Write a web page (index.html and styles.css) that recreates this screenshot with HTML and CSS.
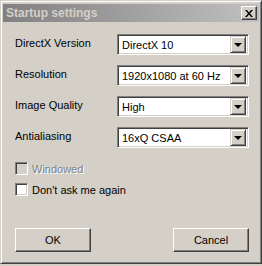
FILE: index.html
```html
<!DOCTYPE html>
<html lang="en">
<head>
    <meta charset="UTF-8">
    <title>Startup settings</title>
    <link rel="stylesheet" href="styles.css">
</head>
<body>
<div class="window">
    <div class="title_bar">
        <span class="title">Startup settings</span>
        <a href="javascript:;" class="close">
            <svg width="8" height="7" viewBox="0 0 8 7"><path d="M0 0h2l2 2.5L6 0h2L5 3.5 8 7H6L4 4.5 2 7H0l3-3.5z" fill="#000"/></svg>
        </a>
    </div>
    <div class="content">
        <div class="rows">
            <label class="lbl">DirectX Version</label>
            <div class="combo"><span class="val">DirectX 10</span><span class="arrow"></span></div>
            <label class="lbl">Resolution</label>
            <div class="combo"><span class="val">1920x1080 at 60 Hz</span><span class="arrow"></span></div>
            <label class="lbl">Image Quality</label>
            <div class="combo"><span class="val">High</span><span class="arrow"></span></div>
            <label class="lbl">Antialiasing</label>
            <div class="combo"><span class="val">16xQ CSAA</span><span class="arrow"></span></div>
        </div>
        <div class="checks">
            <div class="check disabled"><span class="box"></span><span>Windowed</span></div>
            <div class="check"><span class="box"></span><span>Don't ask me again</span></div>
        </div>
        <div class="buttons">
            <a href="javascript:;" class="btn">OK</a>
            <a href="javascript:;" class="btn cancel">Cancel</a>
        </div>
    </div>
</div>
</body>
</html>
```

FILE: styles.css
```css
*{margin: 0;padding: 0;box-sizing: border-box;}
html,body{background: #d4d0c8;}
body{font-family: "Liberation Sans", Arial, sans-serif;font-size: 11px;color: #000;}
.window{width: 262px;height: 264px;background: #d4d0c8;border: 1px solid;border-color: #d4d0c8 #404040 #404040 #d4d0c8;box-shadow: inset 1px 1px #fff, inset -1px -1px #808080;padding: 3px 2px 2px 2px;display: flex;flex-direction: column;}
.title_bar{height: 18px;background: linear-gradient(to right, #808080, #c0c0c0);display: flex;align-items: center;justify-content: space-between;padding: 0 2px 0 3px;}
.title{font-size: 12px;font-weight: bold;color: #d4d0c8;}
.close{width: 16px;height: 14px;background: #d4d0c8;border: 1px solid;border-color: #fff #404040 #404040 #fff;box-shadow: inset -1px -1px #808080;display: flex;align-items: center;justify-content: center;}
.close svg{display: block;margin-left: -1px;}
.content{padding: 12px 10px 0 12px;display: flex;flex-direction: column;}
.rows{display: grid;grid-template-columns: 1fr 132px;grid-auto-rows: 21px;row-gap: 10px;align-items: center;}
.lbl{padding-bottom: 3px;}
.combo{height: 21px;background: #fff;border: 1px solid;border-color: #808080 #fff #fff #808080;box-shadow: inset 1px 1px #404040, inset -1px -1px #d4d0c8;display: flex;align-items: center;padding: 2px 2px 2px 4px;}
.val{flex: 1;}
.arrow{width: 16px;height: 17px;background: #d4d0c8;border: 1px solid;border-color: #d4d0c8 #404040 #404040 #d4d0c8;box-shadow: inset 1px 1px #fff, inset -1px -1px #808080;position: relative;}
.arrow:after{content: "";position: absolute;left: 3px;top: 6px;border-left: 4px solid transparent;border-right: 4px solid transparent;border-top: 4px solid #000;}
.checks{margin-top: 14px;display: flex;flex-direction: column;gap: 8px;}
.check{display: flex;align-items: center;gap: 4px;height: 13px;}
.box{width: 13px;height: 13px;background: #fff;border: 1px solid;border-color: #808080 #fff #fff #808080;box-shadow: inset 1px 1px #404040, inset -1px -1px #d4d0c8;}
.disabled{color: #808080;text-shadow: 1px 1px #fff;}
.disabled .box{background: #d4d0c8;}
.buttons{margin-top: 32px;display: flex;justify-content: space-between;}
.btn{width: 76px;height: 24px;background: #d4d0c8;border: 1px solid;border-color: #fff #404040 #404040 #fff;box-shadow: inset -1px -1px #808080, inset 1px 1px #d4d0c8;display: flex;align-items: center;justify-content: center;color: #000;text-decoration: none;}
```
